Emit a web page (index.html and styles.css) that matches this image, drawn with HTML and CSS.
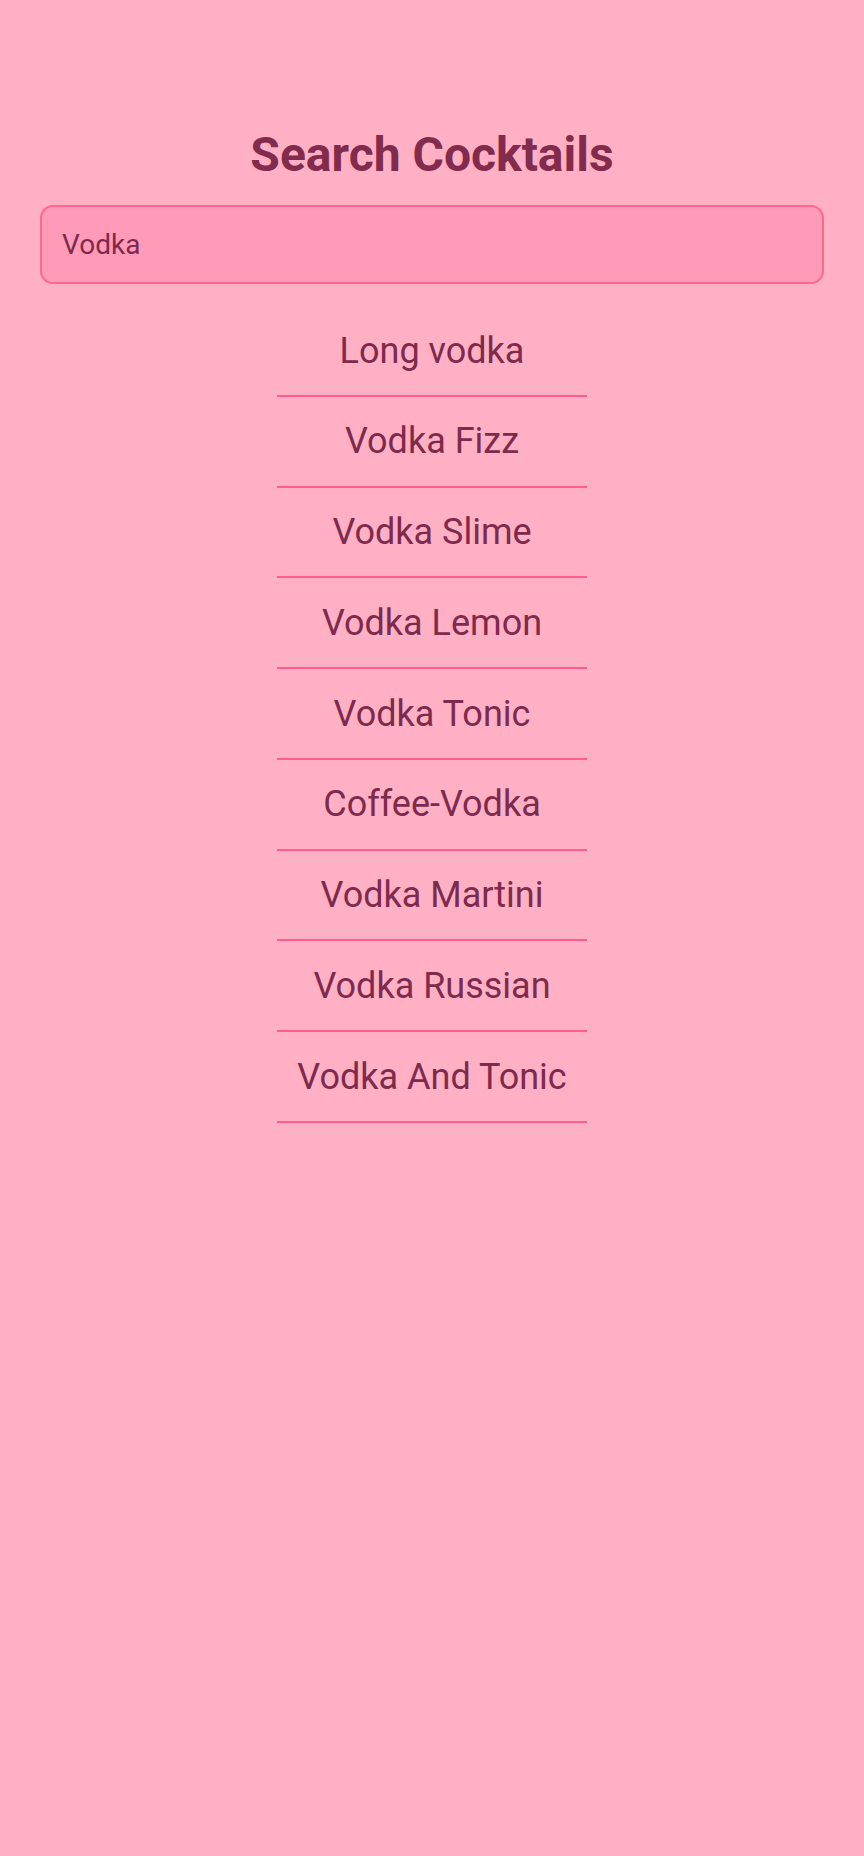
FILE: index.html
```html
<!DOCTYPE html>
<html lang="en">
<head>
<meta charset="utf-8">
<title>Search Cocktails</title>
<link rel="stylesheet" href="styles.css">
</head>
<body>
<main class="screen">
  <h1 class="title">Search Cocktails</h1>
  <div class="search">
    <input class="search-input" type="text" value="Vodka" aria-label="Search">
  </div>
  <ul class="results">
    <li class="result">Long vodka</li>
    <li class="result">Vodka Fizz</li>
    <li class="result">Vodka Slime</li>
    <li class="result">Vodka Lemon</li>
    <li class="result">Vodka Tonic</li>
    <li class="result">Coffee-Vodka</li>
    <li class="result">Vodka Martini</li>
    <li class="result">Vodka Russian</li>
    <li class="result">Vodka And Tonic</li>
  </ul>
</main>
</body>
</html>
```

FILE: styles.css
```css
html, body {
  margin: 0;
  padding: 0;
  background: #ffb0c4;
}

.screen {
  min-height: 1856px;
  box-sizing: border-box;
  padding: 127px 40px 0;
  font-family: Roboto, "Liberation Sans", sans-serif;
  color: #7e2a4c;
  display: flex;
  flex-direction: column;
  align-items: stretch;
}

.title {
  margin: 0;
  font-size: 48px;
  font-weight: 700;
  line-height: 56px;
  text-align: center;
  color: #822b4c;
}

.search {
  margin-top: 22px;
}

.search-input {
  display: block;
  width: 100%;
  box-sizing: border-box;
  height: 79px;
  margin: 0;
  padding: 0 20px;
  border: 2px solid #ff6690;
  border-radius: 13px;
  background: #ff9bb8;
  font-family: Roboto, "Liberation Sans", sans-serif;
  font-size: 28px;
  color: #7e2a4c;
  outline: none;
}

.results {
  list-style: none;
  margin: 22px auto 0;
  padding: 0;
  width: 310px;
}

.result {
  font-size: 36px;
  line-height: 42px;
  padding: 23.5px 0 23.25px;
  text-align: center;
  border-bottom: 2px solid #ff5e8b;
}
```
